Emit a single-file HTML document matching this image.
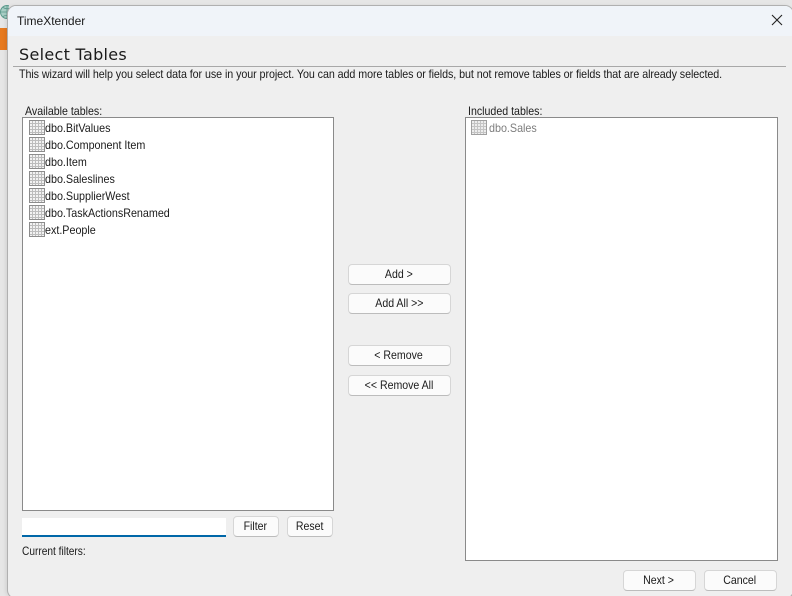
<!DOCTYPE html>
<html>
<head>
<meta charset="utf-8">
<style>
html,body{margin:0;padding:0;width:792px;height:596px;overflow:hidden;background:#e6e6e6;font-family:"Liberation Sans",sans-serif;color:#1a1a1a}
#root{position:relative;width:792px;height:596px;overflow:hidden}
.a{position:absolute;white-space:nowrap}
#win{position:absolute;left:8px;top:6px;width:785px;height:592px;background:#efefef;border-radius:8px;box-shadow:0 0 0 1px #b0b0b0,-2px 0 4px rgba(0,0,0,.1);overflow:hidden}
#title{position:absolute;left:0;top:0;width:100%;height:30px;background:#f0f4f9}
.t{font-size:12px;line-height:14px;transform-origin:0 50%}
.box{position:absolute;background:#fff;border:1px solid #8a8a8a;box-sizing:border-box}
.btn{position:absolute;background:#fbfbfb;border:1px solid #d6d6d6;border-bottom-color:#bcbcbc;border-radius:4px;box-sizing:border-box;text-align:center;font-size:12px;line-height:19px;color:#1a1a1a}
.btn b{display:inline-block;font-weight:normal;transform:scaleX(.88);white-space:nowrap;margin-left:-1px}
.row{position:absolute;left:29px;width:200px;height:17px}
.row svg,.inc svg{position:absolute;left:0;top:1px}
.row span,.inc span{position:absolute;left:16px;top:2px;font-size:12px;line-height:14px;white-space:nowrap;transform-origin:0 50%;transform:scaleX(.895)}
</style>
</head>
<body>
<div id="root">
<svg class="a" style="left:0;top:4px" width="9" height="16" viewBox="0 0 9 16"><circle cx="7" cy="8" r="6.5" fill="#a9cfc6" stroke="#5c9a8c"/><path d="M1 8H13M7 1V15M3 3.5Q7 6 11 3.5M3 12.5Q7 10 11 12.5" fill="none" stroke="#5c9a8c" stroke-width=".8"/></svg>
<div class="a" style="left:0;top:28px;width:8px;height:22px;background:#e77a1f"></div>

<div id="win"><div id="title"></div></div>

<div class="a t" style="left:17px;top:14px">TimeXtender</div>
<svg class="a" style="left:771px;top:14px" width="12" height="12" viewBox="0 0 12 12"><path d="M1 1L11 11M11 1L1 11" stroke="#222" stroke-width="1.1" fill="none"/></svg>

<div class="a" style="left:19px;top:45px;font-family:'DejaVu Sans',sans-serif;font-size:16px;line-height:19px;letter-spacing:.3px">Select Tables</div>
<div class="a" style="left:13px;top:66px;width:773px;height:1px;background:#a8a8a8"></div>
<div class="a t" style="left:19px;top:67px;letter-spacing:-.07px;transform:scaleX(.892)">This wizard will help you select data for use in your project. You can add more tables or fields, but not remove tables or fields that are already selected.</div>

<div class="a t" style="left:25px;top:104px;transform:scaleX(.885)">Available tables:</div>
<div class="box" style="left:22px;top:117px;width:312px;height:394px"></div>

<div class="row" style="top:119px"><svg width="16" height="15" viewBox="0 0 16 15"><use href="#g"/></svg><span>dbo.BitValues</span></div>
<div class="row" style="top:136px"><svg width="16" height="15" viewBox="0 0 16 15"><use href="#g"/></svg><span>dbo.Component Item</span></div>
<div class="row" style="top:153px"><svg width="16" height="15" viewBox="0 0 16 15"><use href="#g"/></svg><span>dbo.Item</span></div>
<div class="row" style="top:170px"><svg width="16" height="15" viewBox="0 0 16 15"><use href="#g"/></svg><span>dbo.Saleslines</span></div>
<div class="row" style="top:187px"><svg width="16" height="15" viewBox="0 0 16 15"><use href="#g"/></svg><span>dbo.SupplierWest</span></div>
<div class="row" style="top:204px"><svg width="16" height="15" viewBox="0 0 16 15"><use href="#g"/></svg><span>dbo.TaskActionsRenamed</span></div>
<div class="row" style="top:221px"><svg width="16" height="15" viewBox="0 0 16 15"><use href="#g"/></svg><span>ext.People</span></div>

<div class="a" style="left:22px;top:518px;width:204px;height:17px;background:#fff"></div>
<div class="a" style="left:22px;top:535px;width:204px;height:2px;background:#0067a8"></div>
<div class="btn" style="left:233px;top:516px;width:46px;height:21px"><b>Filter</b></div>
<div class="btn" style="left:287px;top:516px;width:46px;height:21px"><b>Reset</b></div>
<div class="a t" style="left:22px;top:544px;transform:scaleX(.845)">Current filters:</div>

<div class="btn" style="left:348px;top:264px;width:103px;height:21px"><b>Add &gt;</b></div>
<div class="btn" style="left:348px;top:293px;width:103px;height:21px"><b>Add All &gt;&gt;</b></div>
<div class="btn" style="left:348px;top:345px;width:103px;height:21px"><b>&lt; Remove</b></div>
<div class="btn" style="left:348px;top:375px;width:103px;height:21px"><b>&lt;&lt; Remove All</b></div>

<div class="a t" style="left:468px;top:104px;transform:scaleX(.885)">Included tables:</div>
<div class="box" style="left:465px;top:117px;width:313px;height:444px"></div>
<div class="a inc" style="left:471px;top:119px;width:100px;height:17px;color:#7d7d7d"><svg width="16" height="15" viewBox="0 0 16 15"><use href="#g2"/></svg><span style="left:18px">dbo.Sales</span></div>

<div class="btn" style="left:623px;top:570px;width:73px;height:21px"><b>Next &gt;</b></div>
<div class="btn" style="left:704px;top:570px;width:73px;height:21px"><b>Cancel</b></div>

<svg width="0" height="0" style="position:absolute">
<defs>
<g id="g"><rect x=".5" y=".5" width="15" height="14" fill="#f2f2f2" stroke="#8c8c8c"/><path d="M3.5 1V14M6.5 1V14M9.5 1V14M12.5 1V14M1 3.5H15M1 6.5H15M1 9.5H15M1 12.5H15" stroke="#bcbcbc" fill="none"/></g>
<g id="g2"><rect x=".5" y=".5" width="15" height="14" fill="#ededed" stroke="#a0a0a0"/><path d="M3.5 1V14M6.5 1V14M9.5 1V14M12.5 1V14M1 3.5H15M1 6.5H15M1 9.5H15M1 12.5H15" stroke="#c4c4c4" fill="none"/></g>
</defs>
</svg>
</div>
</body>
</html>
